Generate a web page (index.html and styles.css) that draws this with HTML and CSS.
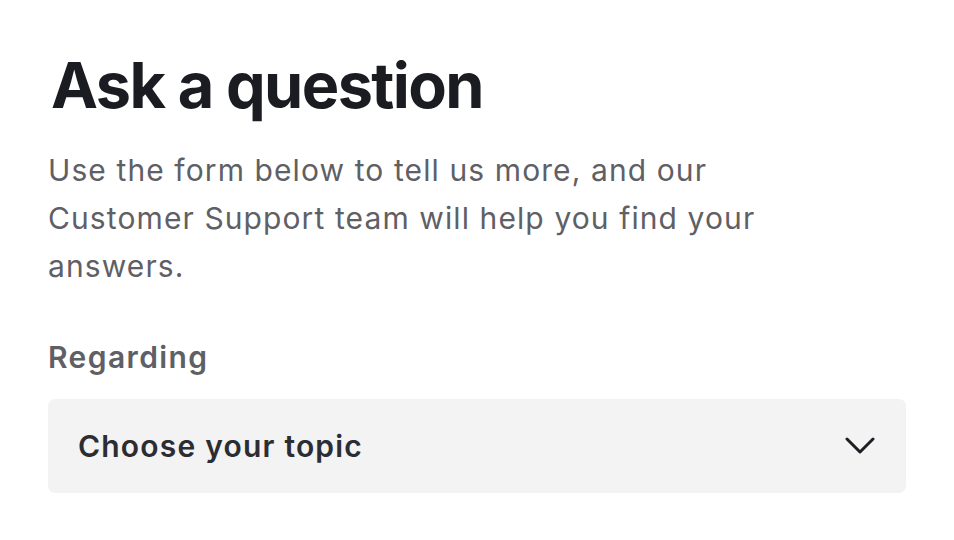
FILE: index.html
```html
<!DOCTYPE html>
<html lang="en">
<head>
<meta charset="utf-8">
<link rel="stylesheet" href="styles.css">
</head>
<body>
<main class="page">
  <h1 class="title">Ask a question</h1>
  <p class="intro">Use the form below to tell us more, and our Customer Support team will help you find your answers.</p>
  <div class="field">
    <label class="label">Regarding</label>
    <div class="select">
      <span class="select-text">Choose your topic</span>
      <svg class="chevron" width="30" height="18" viewBox="0 0 30 18" fill="none">
        <path d="M2 2 L15 15 L28 2" stroke="#1e1f24" stroke-width="3" stroke-linecap="round" stroke-linejoin="round"/>
      </svg>
    </div>
  </div>
</main>
</body>
</html>
```
FILE: styles.css
```css
html, body {
  margin: 0;
  padding: 0;
  background: #ffffff;
}
body {
  font-family: Inter, "Noto Sans", "Liberation Sans", sans-serif;
}
.page {
  padding: 45px 48px 0 48px;
  width: 858px;
}
.title {
  margin: 0 0 0 3px;
  font-size: 63px;
  font-weight: 700;
  letter-spacing: -1.6px;
  color: #1b1c21;
  line-height: 80px;
}
.intro {
  margin: 21px 0 0 0;
  font-size: 30px;
  line-height: 48px;
  letter-spacing: 1.1px;
  color: #5f6065;
  max-width: 740px;
}
.field {
  margin-top: 47px;
}
.label {
  display: block;
  font-size: 30px;
  font-weight: 600;
  letter-spacing: 1.4px;
  color: #5f6065;
  line-height: 40px;
}
.select {
  margin-top: 22px;
  height: 94px;
  background: #f3f3f3;
  border-radius: 7px;
  display: flex;
  align-items: center;
  justify-content: space-between;
  padding: 0 31px 0 30px;
}
.select-text {
  font-size: 30px;
  font-weight: 600;
  letter-spacing: 1.2px;
  color: #2c2d32;
}
.chevron {
  display: block;
}
```
